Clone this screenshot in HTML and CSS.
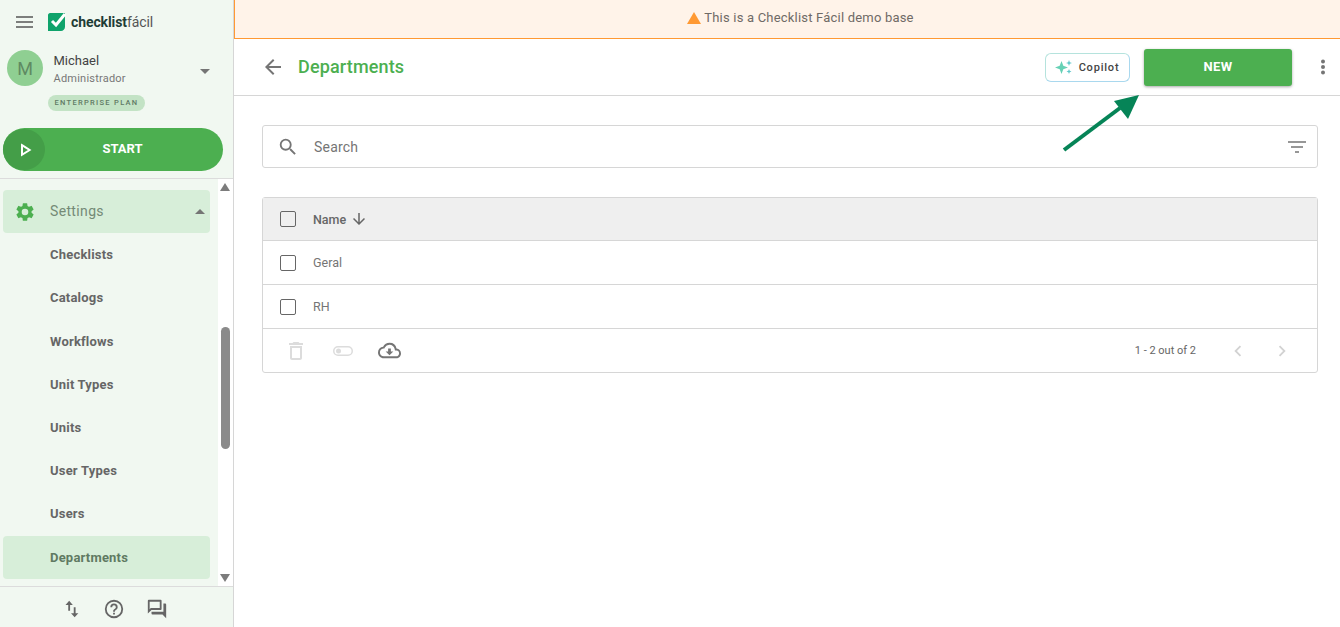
FILE: index.html
```html
<!DOCTYPE html>
<html lang="en">
<head>
<meta charset="utf-8">
<title>Departments</title>
<link rel="stylesheet" href="styles.css">
</head>
<body>
<div class="app">
  <aside class="sidebar">
    <div class="brand">
      <svg class="burger" viewBox="0 0 18 14" width="18" height="14"><path d="M0 2h17M0 7h17M0 12h17" stroke="#555" stroke-width="1.5" fill="none"/></svg>
      <svg class="logo-mark" viewBox="0 0 20 20" width="20" height="20"><path d="M3 1h15v14c0 2-2 4-4 4H1V3c0-1 1-2 2-2z" fill="#0fa36b"/><path d="M5 9l4 4 9-11" stroke="#fff" stroke-width="3" fill="none"/></svg>
      <span class="logo-text"><b>checklist</b>fácil</span>
    </div>
    <div class="user">
      <div class="avatar">M</div>
      <div class="user-info">
        <div class="user-name">Michael</div>
        <div class="user-role">Administrador</div>
      </div>
      <span class="caret-down"></span>
    </div>
    <div class="plan-row"><span class="plan">ENTERPRISE PLAN</span></div>
    <button class="start">
      <span class="start-icon"><svg viewBox="0 0 12 14" width="12" height="14"><path d="M2 2.2L9.6 7 2 11.8z" fill="none" stroke="#fff" stroke-width="2"/></svg></span>
      <span class="start-label">START</span>
    </button>
    <div class="menu-wrap">
      <nav class="menu">
        <div class="menu-item menu-parent">
          <svg class="gear" viewBox="0 0 24 24" width="22" height="22"><path fill="#4caf50" d="M19.14 12.94c.04-.3.06-.61.06-.94s-.02-.64-.07-.94l2.03-1.58a.49.49 0 0 0 .12-.61l-1.92-3.32a.49.49 0 0 0-.59-.22l-2.39.96c-.5-.38-1.03-.7-1.62-.94l-.36-2.54a.48.48 0 0 0-.48-.41h-3.84a.48.48 0 0 0-.47.41l-.36 2.54c-.59.24-1.13.57-1.62.94l-2.39-.96a.49.49 0 0 0-.59.22L2.74 8.87a.48.48 0 0 0 .12.61l2.03 1.58c-.05.3-.09.63-.09.94s.02.64.07.94l-2.03 1.58a.49.49 0 0 0-.12.61l1.92 3.32c.12.22.37.29.59.22l2.39-.96c.5.38 1.03.7 1.62.94l.36 2.54c.05.24.24.41.48.41h3.84c.24 0 .44-.17.47-.41l.36-2.54c.59-.24 1.13-.56 1.62-.94l2.39.96c.22.08.47 0 .59-.22l1.92-3.32a.48.48 0 0 0-.12-.61l-2.01-1.58zM12 15.6A3.6 3.6 0 1 1 12 8.4a3.6 3.6 0 0 1 0 7.2z"/></svg>
          <span class="parent-label">Settings</span>
          <span class="caret-up"></span>
        </div>
        <div class="menu-item">Checklists</div>
        <div class="menu-item">Catalogs</div>
        <div class="menu-item">Workflows</div>
        <div class="menu-item">Unit Types</div>
        <div class="menu-item">Units</div>
        <div class="menu-item">User Types</div>
        <div class="menu-item">Users</div>
        <div class="menu-item menu-active">Departments</div>
      </nav>
      <div class="scrollbar">
        <span class="sb-up"></span>
        <span class="sb-thumb"></span>
        <span class="sb-down"></span>
      </div>
    </div>
    <div class="side-foot">
      <svg viewBox="0 0 24 24" width="22" height="22"><path fill="#666" d="M9 3L5 7.5h3V14h2V7.5h3zM15 21l4-4.500h-3V10h-2v6.500h-3z" transform="translate(1 0)"/></svg>
      <svg viewBox="0 0 24 24" width="22" height="22"><path fill="#666" d="M11 18h2v-2h-2v2zm1-16a10 10 0 1 0 0 20 10 10 0 0 0 0-20zm0 18a8 8 0 1 1 0-16 8 8 0 0 1 0 16zm0-14a4 4 0 0 0-4 4h2a2 2 0 1 1 4 0c0 2-3 1.750-3 5h2c0-2.250 3-2.500 3-5a4 4 0 0 0-4-4z"/></svg>
      <svg viewBox="0 0 24 24" width="22" height="22"><path fill="#666" d="M15 4v7H5.170L4 12.170V4h11m1-2H3a1 1 0 0 0-1 1v14l4-4h10a1 1 0 0 0 1-1V3a1 1 0 0 0-1-1zm5 4h-2v9H6v2a1 1 0 0 0 1 1h11l4 4V7a1 1 0 0 0-1-1z"/></svg>
    </div>
  </aside>

  <main class="main">
    <div class="banner">
      <svg viewBox="0 0 14 12" width="14" height="12"><path d="M7 0l7 12H0z" fill="#ff9933"/></svg>
      <span>This is a Checklist Fácil demo base</span>
    </div>
    <header class="topbar">
      <svg class="back" viewBox="0 0 24 24" width="24" height="24"><path fill="#757575" d="M20 11H7.830l5.590-5.590L12 4l-8 8 8 8 1.410-1.410L7.830 13H20z"/></svg>
      <h1 class="title">Departments</h1>
      <button class="copilot">
        <svg viewBox="0 0 18 16" width="18" height="16"><path fill="#66d1b5" d="M6.500 2l1.800 4.700L13 8.500l-4.700 1.800L6.500 15l-1.800-4.700L0 8.500l4.700-1.800z"/><path fill="#5fc7c9" d="M14 1l.8 2.200L17 4l-2.200.8L14 7l-.8-2.200L11 4l2.200-.8zM14 10l.7 1.800 1.800.7-1.800.7L14 15l-.7-1.800-1.800-.7 1.800-.7z"/></svg>
        <span>Copilot</span>
      </button>
      <button class="new"><span class="new-label">NEW</span></button>
      <svg class="kebab" viewBox="0 0 4 16" width="4" height="16"><circle cx="2" cy="2.500" r="2" fill="#757575"/><circle cx="2" cy="8" r="2" fill="#757575"/><circle cx="2" cy="13.500" r="2" fill="#757575"/></svg>
    </header>
    <div class="content">
      <div class="search">
        <svg viewBox="0 0 24 24" width="22" height="22"><path fill="#757575" d="M15.500 14h-.79l-.28-.27A6.470 6.470 0 0 0 16 9.500 6.500 6.500 0 1 0 9.500 16c1.610 0 3.090-.59 4.230-1.570l.27.28v.79l5 4.990L20.490 19l-4.990-5zm-6 0C7.010 14 5 11.990 5 9.500S7.010 5 9.500 5 14 7.010 14 9.500 11.990 14 9.500 14z"/></svg>
        <span class="search-text">Search</span>
        <svg class="filter" viewBox="0 0 18 12" width="18" height="12"><path d="M0 1h18M3 6h12M7 11h4" stroke="#757575" stroke-width="1.500" fill="none"/></svg>
      </div>
      <div class="table">
        <div class="row head">
          <span class="check"></span>
          <span class="head-name">Name</span>
          <svg viewBox="0 0 24 24" width="18" height="18"><path fill="#666" d="M20 12l-1.410-1.410L13 16.170V4h-2v12.170l-5.580-5.590L4 12l8 8 8-8z"/></svg>
        </div>
        <div class="row"><span class="check"></span><span class="cell">Geral</span></div>
        <div class="row"><span class="check"></span><span class="cell">RH</span></div>
        <div class="table-foot">
          <svg class="tool" viewBox="0 0 24 24" width="24" height="24"><path fill="#dcdcdc" d="M6 19c0 1.100.9 2 2 2h8c1.100 0 2-.9 2-2V7H6v12zm2-10h8v10H8V9zm7.500-5l-1-1h-5l-1 1H5v2h14V4z"/></svg>
          <svg class="tool" viewBox="0 0 24 24" width="24" height="24"><path fill="#dcdcdc" d="M17 7H7a5 5 0 0 0 0 10h10a5 5 0 0 0 0-10zm0 8.500H7a3.500 3.500 0 0 1 0-7h10a3.500 3.500 0 0 1 0 7z"/><circle cx="7.500" cy="12" r="2.500" fill="#dcdcdc"/></svg>
          <svg class="tool cloud" viewBox="0 0 24 24" width="23" height="23"><path fill="#757575" d="M19.350 10.040A7.490 7.490 0 0 0 12 4C9.110 4 6.600 5.640 5.350 8.040A5.994 5.994 0 0 0 0 14c0 3.310 2.690 6 6 6h13c2.760 0 5-2.240 5-5 0-2.640-2.050-4.780-4.650-4.960zM19 18H6c-2.210 0-4-1.790-4-4 0-2.050 1.530-3.760 3.560-3.970l1.070-.11.500-.95A5.469 5.469 0 0 1 12 6c2.620 0 4.880 1.860 5.390 4.430l.3 1.500 1.530.11A2.980 2.980 0 0 1 22 15c0 1.650-1.350 3-3 3zm-5.550-8h-2.900v3H8l4 4 4-4h-2.550z"/></svg>
          <span class="count">1 - 2 out of 2</span>
          <svg class="pager pager-prev" viewBox="0 0 24 24" width="22" height="22"><path fill="#d2d2d2" d="M15.410 7.410L14 6l-6 6 6 6 1.410-1.410L10.830 12z"/></svg>
          <svg class="pager pager-next" viewBox="0 0 24 24" width="22" height="22"><path fill="#d2d2d2" d="M10 6L8.590 7.410 13.170 12l-4.580 4.590L10 18l6-6z"/></svg>
        </div>
      </div>
    </div>
  </main>
</div>
<svg class="arrow" viewBox="0 0 80 60" width="80" height="60"><path d="M2 56L58 14" stroke="#068457" stroke-width="4" fill="none"/><path d="M77 1L52 7 66 25z" fill="#068457"/></svg>
</body>
</html>
```
FILE: styles.css
```css
* { box-sizing: border-box; }
html, body { margin: 0; height: 100%; overflow: hidden; }
body { font-family: Roboto, "Liberation Sans", sans-serif; color: #666; background: #fff; }
.app { display: flex; height: 627px; }

.sidebar { width: 234px; flex: none; background: #f1f8f1; border-right: 1px solid #d6d6d6; display: flex; flex-direction: column; }
.brand { height: 44px; display: flex; align-items: center; padding-left: 16px; flex: none; }
.logo-mark { margin-left: 13px; }
.logo-text { margin-left: 4px; font-size: 14px; color: #555; letter-spacing: -0.1px; }
.logo-text b { color: #1f3d36; font-weight: 700; }
.user { height: 48px; display: flex; align-items: center; padding-left: 7px; flex: none; }
.avatar { width: 36px; height: 36px; border-radius: 50%; background: #8fcf92; color: #5f8a62; font-size: 18px; display: flex; align-items: center; justify-content: center; }
.user-info { margin-left: 10.500px; flex: 1; padding-top: 2px; }
.user-name { font-size: 13px; color: #444; line-height: 18px; }
.user-role { font-size: 11px; color: #777; line-height: 17px; letter-spacing: 0.22px; }
.caret-down { width: 0; height: 0; border-left: 5px solid transparent; border-right: 5px solid transparent; border-top: 5px solid #757575; margin: 6px 23px 0 0; }
.plan-row { height: 16px; margin-top: 3px; padding-left: 48px; display: flex; flex: none; }
.plan { height: 16px; width: 97px; border-radius: 8px; background: #c3e3c5; color: #5f7a64; font-size: 7.500px; font-weight: 500; letter-spacing: 1.300px; line-height: 16px; text-align: center; white-space: nowrap; }
.start { position: relative; margin: 17px 0 0 3px; width: 220px; height: 43px; border: 0; border-radius: 22px; background: #4caf50; color: #fff; font: 700 13px Roboto, sans-serif; padding: 0; display: block; flex: none; }
.start-icon { position: absolute; left: 0; top: 1px; width: 42px; height: 41px; border-radius: 50%; background: #449e48; display: flex; align-items: center; justify-content: center; padding-left: 3px; }
.start-label { display: block; text-align: center; margin: 0 0 2px 19px; }

.menu-wrap { margin-top: 7px; height: 409px; display: flex; border-top: 1px solid #dcdcdc; border-bottom: 1px solid #dcdcdc; flex: none; }
.menu { width: 218px; padding: 11px 8px 0 3px; overflow: hidden; }
.menu-item { height: 43.200px; display: flex; align-items: center; padding-left: 47px; font-size: 13px; font-weight: 700; letter-spacing: 0.2px; color: #666; border-radius: 4px; }
.menu-parent { font-weight: 400; font-size: 14px; padding-left: 11px; background: #d7eed9; color: #748a76; }
.gear { flex: none; }
.parent-label { margin: 0 0 2px 14px; flex: 1; letter-spacing: 0.35px; }
.caret-up { width: 0; height: 0; border-left: 5px solid transparent; border-right: 5px solid transparent; border-bottom: 5px solid #757575; margin-right: 5px; }
.menu-active { background: #d7eed9; color: #5f7a62; }
.scrollbar { width: 15px; background: #fff; display: flex; flex-direction: column; align-items: center; padding-top: 4px; }
.sb-up { width: 0; height: 0; border-left: 5px solid transparent; border-right: 5px solid transparent; border-bottom: 8px solid #7c7c7c; margin-left: -2px; }
.sb-thumb { width: 9px; height: 122px; margin-top: 136px; background: #8a8a8a; border-radius: 5px; }
.sb-down { width: 0; height: 0; border-left: 5px solid transparent; border-right: 5px solid transparent; border-top: 8px solid #7c7c7c; margin-left: -2px; margin-top: auto; margin-bottom: 4px; }
.side-foot { flex: 1; display: flex; align-items: center; justify-content: center; gap: 21px; padding-right: 6px; padding-top: 3px; }

.main { flex: 1; min-width: 0; display: flex; flex-direction: column; }
.banner { height: 39px; background: #fff3e9; border-left: 1px solid #ff9933; border-bottom: 1px solid #ff9933; display: flex; align-items: center; justify-content: center; gap: 3px; font-size: 13px; color: #6f6a66; letter-spacing: 0.2px; padding: 0 0 3px 26px; }
.topbar { height: 57px; border-bottom: 1px solid #d6d6d6; display: flex; align-items: center; padding: 0 15px 0 27px; }
.title { margin: 0 0 2px 13px; font-size: 18px; font-weight: 500; letter-spacing: 0.15px; color: #4caf50; flex: 1; }
.copilot { width: 85px; height: 29px; border: 1px solid; border-color: #b5e3dd #a9d8ee #a9d8ee #b5e3dd; border-radius: 6px; background: #fff; display: flex; align-items: center; justify-content: center; gap: 6px; font: 500 11px Roboto, sans-serif; letter-spacing: 0.8px; color: #444; padding: 0 1px 0 0; }
.new { width: 148px; height: 37px; margin-left: 14px; border: 0; border-radius: 3px; background: #4caf50; color: #fff; font: 700 13px Roboto, sans-serif; letter-spacing: 0.3px; box-shadow: 0 1px 3px rgba(0,0,0,.35); padding: 0; }
.new-label { display: block; margin-bottom: 2px; }
.kebab { margin-left: 29px; }
.content { padding: 29px 22px 0 28px; }
.search { height: 43px; border: 1px solid #d6d6d6; border-radius: 3px; display: flex; align-items: center; padding: 0 11px 0 14px; }
.search-text { margin-left: 15px; font-size: 14px; color: #757575; flex: 1; letter-spacing: 0.2px; }
.table { margin-top: 29px; border: 1px solid #d6d6d6; border-radius: 3px; }
.row { height: 44px; display: flex; align-items: center; padding-left: 17px; border-bottom: 1px solid #d6d6d6; }
.row.head { height: 43px; background: #efefef; }
.check { width: 16px; height: 16px; border: 1.500px solid #666; border-radius: 2px; background: #fff; flex: none; }
.head .check { background: transparent; }
.head-name { margin: 0 4px 0 17px; font-size: 12.500px; font-weight: 500; color: #666; }
.cell { margin-left: 17px; font-size: 12.500px; color: #757575; }
.table-foot { height: 43px; display: flex; align-items: center; padding-left: 21px; }
.tool { flex: none; margin-right: 23px; }
.cloud { margin-bottom: 1px; }
.count { margin-left: auto; font-size: 11px; color: #666; }
.pager-prev { margin-left: 31px; }
.pager-next { margin-left: 22px; margin-right: 24px; }

.arrow { position: absolute; left: 1062px; top: 94px; }
```
